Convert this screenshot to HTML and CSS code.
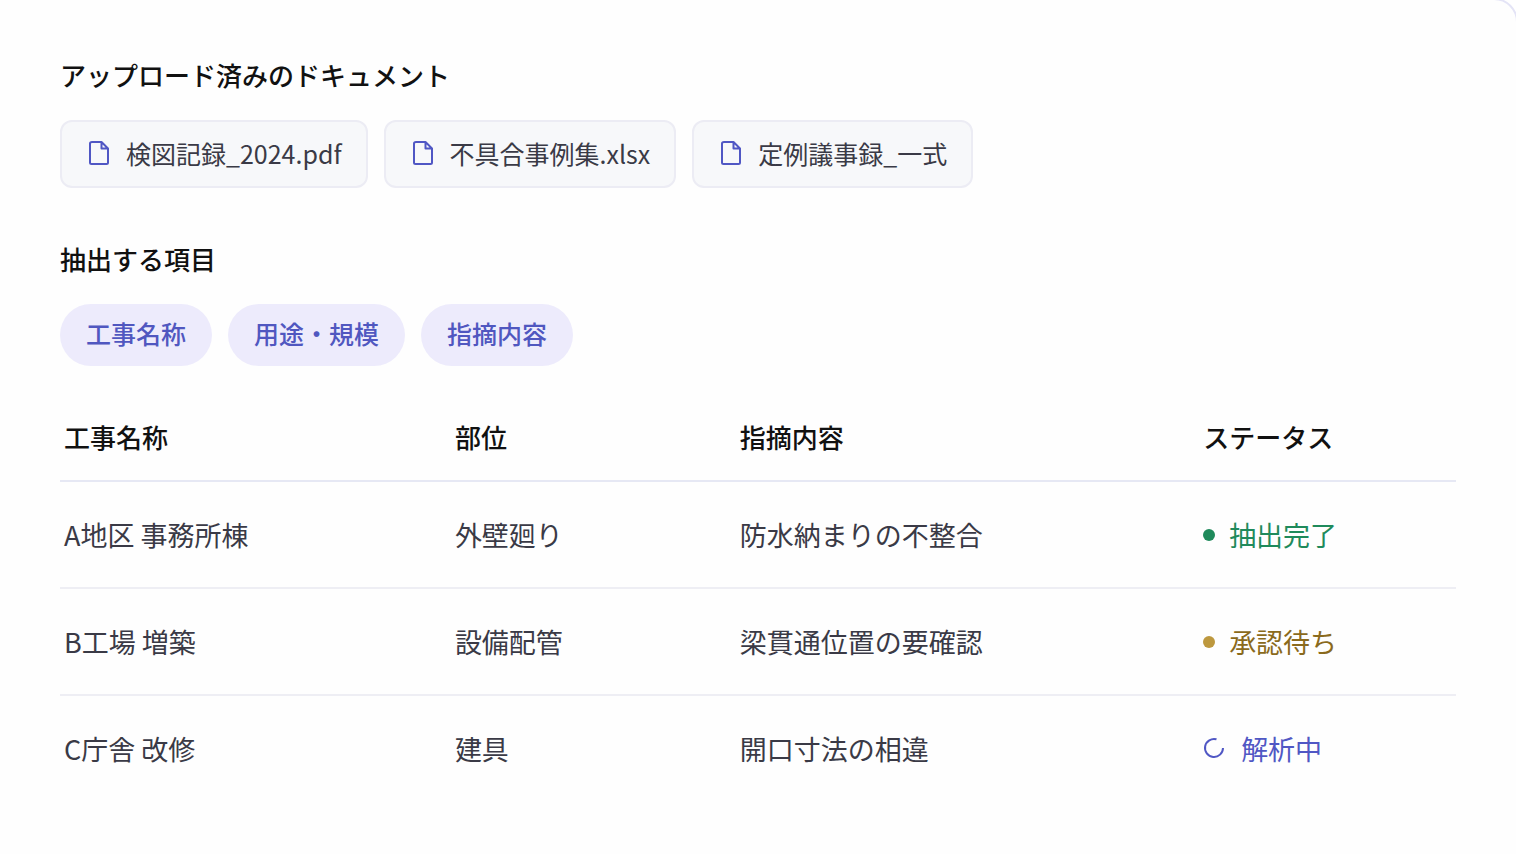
FILE: index.html
```html
<!DOCTYPE html>
<html lang="ja">
<head>
  <meta charset="UTF-8">
  <meta name="viewport" content="width=device-width, initial-scale=1.0">
  <title>アップロード済みのドキュメント</title>
  <link rel="stylesheet" href="styles.css">
</head>
<body>
  <main class="panel">
    <!-- Documents -->
    <section class="documents">
      <h2>アップロード済みのドキュメント</h2>
      <ul class="files">
        <li class="file">
          <svg class="file-icon" viewBox="-2 0 24 26" aria-hidden="true"><path d="M4 2H13.5L20 8.500V22.500Q20 24 18.500 24H3.500Q2 24 2 22.500V3.500Q2 2 4 2ZM13.500 2V8.500H20"/></svg>
          <span>検図記録_2024.pdf</span>
        </li>
        <li class="file">
          <svg class="file-icon" viewBox="-2 0 24 26" aria-hidden="true"><path d="M4 2H13.5L20 8.500V22.500Q20 24 18.500 24H3.500Q2 24 2 22.500V3.500Q2 2 4 2ZM13.500 2V8.500H20"/></svg>
          <span>不具合事例集.xlsx</span>
        </li>
        <li class="file">
          <svg class="file-icon" viewBox="-2 0 24 26" aria-hidden="true"><path d="M4 2H13.5L20 8.500V22.500Q20 24 18.500 24H3.500Q2 24 2 22.500V3.500Q2 2 4 2ZM13.500 2V8.500H20"/></svg>
          <span>定例議事録_一式</span>
        </li>
      </ul>
    </section>

    <!-- Fields to extract -->
    <section class="fields">
      <h2>抽出する項目</h2>
      <ul class="tags">
        <li class="tag">工事名称</li>
        <li class="tag">用途・規模</li>
        <li class="tag">指摘内容</li>
      </ul>
    </section>

    <!-- Results -->
    <table class="results">
      <thead>
        <tr>
          <th class="col-name" scope="col">工事名称</th>
          <th class="col-part" scope="col">部位</th>
          <th class="col-issue" scope="col">指摘内容</th>
          <th scope="col">ステータス</th>
        </tr>
      </thead>
      <tbody>
        <tr>
          <td>A地区 事務所棟</td>
          <td>外壁廻り</td>
          <td>防水納まりの不整合</td>
          <td><span class="status done"><i class="dot"></i>抽出完了</span></td>
        </tr>
        <tr>
          <td>B工場 増築</td>
          <td>設備配管</td>
          <td>梁貫通位置の要確認</td>
          <td><span class="status waiting"><i class="dot"></i>承認待ち</span></td>
        </tr>
        <tr>
          <td>C庁舎 改修</td>
          <td>建具</td>
          <td>開口寸法の相違</td>
          <td>
            <span class="status running">
              <svg class="spinner" viewBox="1 1 24 24" aria-hidden="true"><path d="M14.500 3.300A9 9 0 1 0 21 12"/></svg>解析中
            </span>
          </td>
        </tr>
      </tbody>
    </table>
  </main>
</body>
</html>
```

FILE: styles.css
```css
* {
  box-sizing: border-box;
}
body {
  margin: 0;
  background-color: #fff;
  color: #3a3a46;
  font-family: "Noto Sans CJK JP", sans-serif;
  overflow: hidden;
}
.panel {
  margin: -2px -2px 0 -24px;
  padding: 57px 60px 60px 82px;
  border: 2px solid #e4e4f6;
  border-radius: 24px;
  background-color: #fefefe;
  min-height: calc(100vh + 32px);
}
h2 {
  margin: 0 0 27px;
  color: #111;
  font-size: 26px;
  font-weight: 500;
  line-height: 36px;
}
.files,
.tags {
  display: flex;
  flex-wrap: wrap;
  gap: 16px;
  margin: 0;
  padding: 0;
  list-style: none;
}
.file {
  display: flex;
  align-items: center;
  gap: 16px;
  padding: 13px 24px 15px;
  border: 2px solid #ececf4;
  border-radius: 12px;
  background-color: #f7f8fa;
  font-size: 25px;
  line-height: 36px;
}
.file-icon {
  width: 24px;
  height: 26px;
  fill: none;
  stroke: #5057c4;
  stroke-width: 2;
  stroke-linejoin: round;
}
.fields {
  margin-top: 53px;
}
.tag {
  padding: 11px 26px 15px;
  border-radius: 31px;
  background-color: #edebfc;
  color: #5057c0;
  font-size: 25px;
  font-weight: 500;
  line-height: 36px;
}
.results {
  width: 100%;
  margin-top: 40px;
  border-collapse: collapse;
  table-layout: fixed;
}
.results th {
  padding: 13px 4px 25px;
  border-bottom: 2px solid #e6e8f4;
  color: #111;
  font-size: 26px;
  font-weight: 500;
  line-height: 36px;
  text-align: left;
}
.results td {
  padding: 34px 4px 33px;
  border-bottom: 2px solid #eeeef4;
  font-size: 27px;
  line-height: 38px;
}
.results tbody tr:last-child td {
  border-bottom: none;
}
.col-name {
  width: 28%;
}
.col-part {
  width: 20.4%;
}
.col-issue {
  width: 33.2%;
}
.status {
  display: flex;
  align-items: center;
  gap: 14px;
}
.dot {
  width: 12px;
  height: 12px;
  border-radius: 50%;
}
.done {
  color: #1f8a5b;
}
.done .dot {
  background-color: #1f8a5b;
}
.waiting {
  color: #8a6a1c;
}
.waiting .dot {
  background-color: #bd983e;
}
.running {
  color: #5057c4;
}
.spinner {
  width: 24px;
  height: 24px;
  fill: none;
  stroke: #5057c4;
  stroke-width: 2;
}
```
